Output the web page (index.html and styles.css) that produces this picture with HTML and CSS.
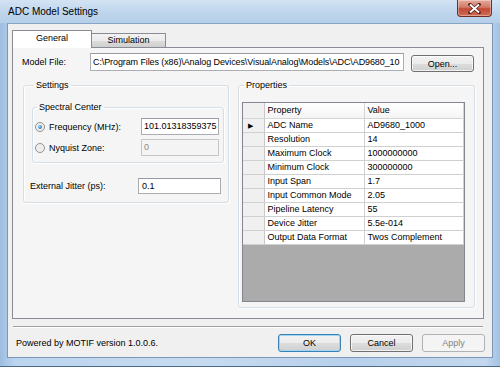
FILE: index.html
```html
<!DOCTYPE html>
<html>
  <head>
    <title>ADC Model Settings</title>
    <link rel="stylesheet" href="styles.css">
  </head>
  <body>
    <div class="window">
      <div class="titlebar">
        <span class="title">ADC Model Settings</span>
        <div class="close">
          <svg width="13" height="11" viewBox="0 0 13 11">
            <path d="M2 1.5 L11 9.5 M11 1.5 L2 9.5" stroke="#5a1e18" stroke-width="3.4" stroke-linecap="square" />
            <path d="M2 1.5 L11 9.5 M11 1.5 L2 9.5" stroke="#fff" stroke-width="1.8" />
          </svg>
        </div>
      </div>

      <div class="client">
        <div class="tabs">
          <div class="tab active">General</div>
          <div class="tab">Simulation</div>
        </div>

        <div class="tab-panel">
          <div class="file-row">
            <span class="file-label">Model File:</span>
            <div class="textbox path">C:\Program Files (x86)\Analog Devices\VisualAnalog\Models\ADC\AD9680_10</div>
            <button class="btn open-btn">Open...</button>
          </div>

          <div class="groups">
            <fieldset class="group settings">
              <legend>Settings</legend>
              <fieldset class="group spectral">
                <legend>Spectral Center</legend>
                <div class="radio-row">
                  <span class="radio checked"></span>
                  <span class="radio-label">Frequency (MHz):</span>
                  <div class="textbox freq">101.01318359375</div>
                </div>
                <div class="radio-row">
                  <span class="radio"></span>
                  <span class="radio-label">Nyquist Zone:</span>
                  <div class="textbox freq disabled">0</div>
                </div>
              </fieldset>
              <div class="jitter-row">
                <span class="jitter-label">External Jitter (ps):</span>
                <div class="textbox jitter">0.1</div>
              </div>
            </fieldset>

            <fieldset class="group props">
              <legend>Properties</legend>
              <div class="grid">
                <table>
                  <thead>
                    <tr>
                      <th class="rowhead"></th>
                      <th class="col-prop">Property</th>
                      <th>Value</th>
                    </tr>
                  </thead>
                  <tbody>
                    <tr><td class="rowhead current">&#9654;</td><td>ADC Name</td><td>AD9680_1000</td></tr>
                    <tr><td class="rowhead"></td><td>Resolution</td><td>14</td></tr>
                    <tr><td class="rowhead"></td><td>Maximum Clock</td><td>1000000000</td></tr>
                    <tr><td class="rowhead"></td><td>Minimum Clock</td><td>300000000</td></tr>
                    <tr><td class="rowhead"></td><td>Input Span</td><td>1.7</td></tr>
                    <tr><td class="rowhead"></td><td>Input Common Mode</td><td>2.05</td></tr>
                    <tr><td class="rowhead"></td><td>Pipeline Latency</td><td>55</td></tr>
                    <tr><td class="rowhead"></td><td>Device Jitter</td><td>5.5e-014</td></tr>
                    <tr><td class="rowhead"></td><td>Output Data Format</td><td>Twos Complement</td></tr>
                  </tbody>
                </table>
              </div>
            </fieldset>
          </div>
        </div>

        <div class="separator"></div>

        <div class="footer">
          <span class="powered">Powered by MOTIF version 1.0.0.6.</span>
          <button class="btn default">OK</button>
          <button class="btn">Cancel</button>
          <button class="btn" disabled>Apply</button>
        </div>
      </div>
    </div>
  </body>
</html>
```

FILE: styles.css
```css
html,
body {
  margin: 0;
  padding: 0;
}

body {
  font-family: "Liberation Sans", Arial, sans-serif;
  font-size: 9px;
  color: #000;
}

.window {
  width: 500px;
  height: 367px;
  box-sizing: border-box;
  padding: 0 7px 8px 7px;
  display: flex;
  flex-direction: column;
  background: linear-gradient(90deg, #9dbde0 0%, #bcd5ee 3%, #c6dbf0 40%, #b8d0ea 70%, #c3d8ee 97%, #a5c2e2 100%);
  border-bottom: 1px solid #4a6a8c;
}

.titlebar {
  height: 23px;
  display: flex;
  align-items: flex-start;
  justify-content: space-between;
  background: linear-gradient(180deg, #d3e3f4 0%, #bdd4ec 60%, #b6cfe9 100%);
  margin: 0 -7px;
  padding: 0 8px 0 8px;
}

.title {
  font-size: 10px;
  line-height: 10px;
  padding-top: 7px;
  color: #000;
}

.close {
  width: 35px;
  height: 17px;
  box-sizing: border-box;
  border: 1px solid #6d2c24;
  border-top: none;
  border-radius: 0 0 4px 4px;
  background: linear-gradient(180deg, #e5aa9c 0%, #d47a68 45%, #c14a36 55%, #d06c54 100%);
  display: flex;
  align-items: center;
  justify-content: center;
  box-shadow: inset 0 0 0 1px rgba(255, 255, 255, 0.35);
}

.client {
  flex: 1;
  background: #f0f0f0;
  border: 1px solid #7b97b7;
  border-top-color: #8aa6c6;
  padding: 6px 8px 0 4px;
  display: flex;
  flex-direction: column;
}

.tabs {
  display: flex;
  align-items: flex-end;
  height: 17px;
  padding-left: 1px;
}

.tab {
  height: 14px;
  box-sizing: border-box;
  border: 1px solid #898c95;
  border-bottom: none;
  background: linear-gradient(180deg, #f2f2f2 0%, #ebebeb 50%, #dddddd 51%, #cfcfcf 100%);
  text-align: center;
  line-height: 13px;
  width: 75px;
  margin-left: -1px;
}

.tab.active {
  height: 18px;
  width: 80px;
  background: #fff;
  position: relative;
  z-index: 1;
  margin-bottom: -1px;
  line-height: 15px;
}

.tab-panel {
  height: 272px;
  box-sizing: border-box;
  border: 1px solid #898c95;
  background: #f5f5f5;
  padding: 5px 8px 0 9px;
}

.file-row {
  display: flex;
  align-items: center;
  height: 18px;
}

.file-label {
  width: 68px;
}

.textbox {
  height: 17px;
  box-sizing: border-box;
  border: 1px solid #abadb3;
  border-top-color: #979ba3;
  background: #fff;
  padding: 0 3px;
  line-height: 15px;
  white-space: nowrap;
  overflow: hidden;
}

.textbox.path {
  width: 314px;
  height: 18px;
  line-height: 16px;
  padding: 0 2px;
  letter-spacing: -0.1px;
}

.textbox.disabled {
  background: #f4f4f4;
  border-color: #c3c6cb;
  color: #8a8a8a;
}

.btn {
  font-family: inherit;
  font-size: 9px;
  color: #000;
  height: 18px;
  width: 63px;
  padding: 0;
  border: 1px solid #707070;
  border-radius: 3px;
  background: linear-gradient(180deg, #f2f2f2 0%, #ebebeb 50%, #dddddd 51%, #cfcfcf 100%);
  box-shadow: inset 0 0 0 1px rgba(255, 255, 255, 0.7);
}

.btn.default {
  border-color: #3c7fb1;
  box-shadow: inset 0 0 0 1px #9bd6f5;
}

.btn:disabled {
  border-color: #adb2b5;
  background: #f4f4f4;
  color: #838383;
  box-shadow: none;
}

.open-btn {
  margin-left: 7px;
  height: 17px;
  margin-top: 3px;
}

.groups {
  display: flex;
  gap: 9px;
  margin-top: 9px;
  padding-left: 1px;
}

.group {
  margin: 0;
  padding: 0;
  min-width: 0;
  border: 1px solid #d5dfe5;
  border-radius: 3px;
  box-shadow: inset 1px 1px 0 #fff, 1px 1px 0 #fff;
}

.group legend {
  padding: 0 2px;
  margin-left: 2px;
  line-height: 11px;
}

.settings {
  width: 206px;
  height: 123px;
  box-sizing: border-box;
  padding: 11px 4px 0 8px;
}

.spectral {
  width: 192px;
  box-sizing: border-box;
  padding: 5px 0 6px 2px;
}

.radio-row {
  display: flex;
  align-items: center;
  height: 17px;
}

.radio-row + .radio-row {
  margin-top: 4px;
}

.radio {
  width: 8px;
  height: 8px;
  border: 1px solid #8e8f8f;
  border-radius: 50%;
  background: radial-gradient(circle, #e8e8e8 0%, #f6f6f6 100%);
  display: flex;
  align-items: center;
  justify-content: center;
  margin-right: 4px;
}

.radio.checked::after {
  content: "";
  width: 4px;
  height: 4px;
  border-radius: 50%;
  background: radial-gradient(circle at 35% 35%, #8ad0f5 0%, #2467a8 100%);
}

.radio-label {
  width: 92px;
}

.textbox.freq {
  width: 78px;
  padding: 0 2px;
}

.jitter-row {
  display: flex;
  align-items: center;
  margin-top: 15px;
  margin-left: -2px;
  height: 16px;
}

.jitter-label {
  width: 108px;
}

.textbox.jitter {
  width: 83px;
  height: 16px;
  line-height: 14px;
}

.props {
  width: 237px;
  height: 228px;
  box-sizing: border-box;
  padding: 11px 0 0 3px;
}

.grid {
  width: 223px;
  height: 200px;
  box-sizing: border-box;
  border: 1px solid #828790;
  background: #ababab;
}

.grid table {
  width: 100%;
  border-collapse: collapse;
  table-layout: fixed;
}

.grid th,
.grid td {
  height: 14px;
  padding: 0 0 0 3px;
  text-align: left;
  font-weight: normal;
  border: 1px solid #d0d0d0;
  border-top: none;
  border-left: none;
  background: #fff;
  white-space: nowrap;
  overflow: hidden;
  line-height: 13px;
  box-sizing: border-box;
}

.grid th {
  height: 15px;
  background: linear-gradient(180deg, #ffffff 0%, #f4f4f4 100%);
  border-right: 1px solid #d5d5d5;
  border-bottom: 1px solid #d5d5d5;
}

.grid .rowhead {
  width: 21px;
  background: #f0f0f0;
  border-right: 1px solid #c8c8c8;
  padding: 0;
}

.grid .col-prop {
  width: 100px;
}

.grid .current {
  text-align: center;
  font-size: 7px;
  padding-right: 5px;
}

.separator {
  height: 1px;
  background: #a0a0a0;
  border-bottom: 1px solid #fff;
  margin: 7px 1px 0 1px;
}

.footer {
  flex: 1;
  display: flex;
  align-items: center;
  gap: 9px;
  padding: 0 0 0 4px;
  margin-right: -1px;
}

.powered {
  flex: 1;
}
```
